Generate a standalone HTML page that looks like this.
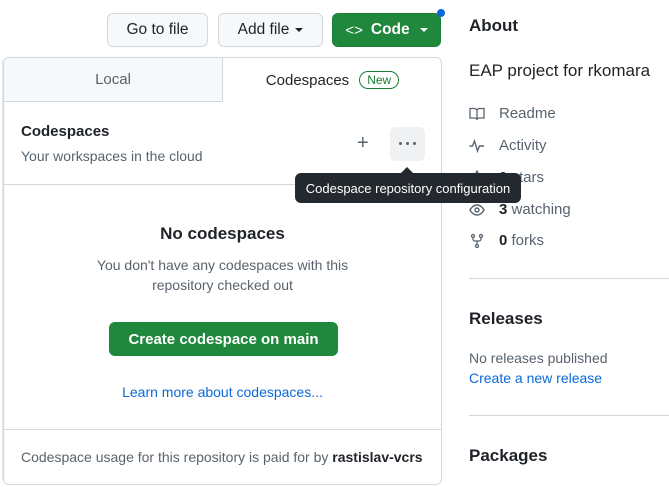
<!DOCTYPE html>
<html><head><style>
*{box-sizing:border-box;margin:0;padding:0}
body{width:669px;height:487px;overflow:hidden;background:#fff;font-family:"Liberation Sans",sans-serif;color:#1f2328;position:relative}
.abs{position:absolute}
.btn{position:absolute;top:13px;height:34px;border:1px solid #d0d7de;border-radius:6px;background:#f6f8fa;font-size:15.5px;font-weight:500;display:flex;align-items:center;justify-content:center;color:#1f2328}
.caret{display:inline-block;width:0;height:0;border-left:4px solid transparent;border-right:4px solid transparent;border-top:4px solid currentColor;margin-left:6px}
.side{position:absolute;left:469px;font-size:15px;color:#59636e;display:flex;align-items:center}
.side svg{margin-right:14px}
.dot{position:absolute;top:15px;width:3px;height:3px;border-radius:50%;background:#59636e}
</style></head><body>
<div class="abs" style="left:0;top:60px;width:3px;height:420px;border-right:1px solid #e5e8eb"></div>
<div class="btn" style="left:107px;width:101px">Go to file</div>
<div class="btn" style="left:218px;width:105px">Add file<span class="caret"></span></div>
<div class="btn" style="left:332px;width:109px;background:#1f883d;border-color:#1a7f37;color:#fff;font-weight:bold"><span style="font-weight:normal;margin-right:8px;font-size:15px">&lt;&gt;</span>Code<span class="caret" style="margin-left:10px"></span></div>
<div class="abs" style="left:437px;top:9px;width:8px;height:8px;border-radius:50%;background:#0969da"></div>

<div class="abs" style="left:3px;top:57px;width:439px;height:428px;border:1px solid #d0d7de;border-radius:6px;background:#fff;overflow:hidden">
 <div class="abs" style="left:0;top:0;width:219px;height:44px;background:#f6f8fa;border-bottom:1px solid #d0d7de;border-right:1px solid #d0d7de;font-size:15px;color:#59636e;display:flex;align-items:center;justify-content:center">Local</div>
 <div class="abs" style="left:219px;top:0;width:219px;height:44px;display:flex;align-items:center;justify-content:center;font-size:15px;color:#1f2328">Codespaces<span style="margin-left:10px;border:1px solid #1a7f37;color:#1a7f37;border-radius:10px;font-size:12px;padding:1px 7px;font-weight:500">New</span></div>
 <div class="abs" style="left:17px;top:65px;font-size:15px;font-weight:bold">Codespaces</div>
 <div class="abs" style="left:17px;top:90px;font-size:14px;color:#59636e">Your workspaces in the cloud</div>
 <div class="abs" style="left:353px;top:75px;font-size:20px;color:#59636e;line-height:20px">+</div>
 <div class="abs" style="left:386px;top:69px;width:35px;height:34px;background:#eff1f3;border-radius:6px">
  <div class="dot" style="left:9px"></div><div class="dot" style="left:16px"></div><div class="dot" style="left:23px"></div>
 </div>
 <div class="abs" style="left:0;top:126px;width:439px;border-top:1px solid #d0d7de"></div>
 <div class="abs" style="left:0;top:166px;width:437px;text-align:center;font-size:17px;font-weight:bold">No codespaces</div>
 <div class="abs" style="left:0;top:197px;width:437px;text-align:center;font-size:14px;color:#59636e;line-height:20px">You don't have any codespaces with this<br>repository checked out</div>
 <div class="abs" style="left:105px;top:264px;width:229px;height:34px;background:#1f883d;border-radius:6px;color:#fff;font-weight:bold;font-size:15px;display:flex;align-items:center;justify-content:center">Create codespace on main</div>
 <div class="abs" style="left:0;top:326px;width:437px;text-align:center;font-size:14px;color:#0969da">Learn more about codespaces...</div>
 <div class="abs" style="left:0;top:371px;width:439px;border-top:1px solid #d0d7de"></div>
 <div class="abs" style="left:17px;top:391px;font-size:14px;color:#59636e">Codespace usage for this repository is paid for by <b style="color:#1f2328;font-weight:bold">rastislav-vcrs</b></div>
</div>

<div class="abs" style="left:469px;top:16px;font-size:17px;font-weight:bold">About</div>
<div class="abs" style="left:469px;top:61px;font-size:17px">EAP project for rkomara</div>
<div class="side" style="top:105px"><svg width="16" height="16" viewBox="0 0 16 16" fill="none" stroke="#59636e" stroke-width="1.3"><path d="M1 2.5h4.5a2.5 2.5 0 0 1 2.5 2.5v9a2 2 0 0 0-2-2H1zM15 2.5h-4.5A2.5 2.5 0 0 0 8 5v9a2 2 0 0 1 2-2h5z"/></svg>Readme</div>
<div class="side" style="top:137px"><svg width="16" height="16" viewBox="0 0 16 16" fill="none" stroke="#59636e" stroke-width="1.4"><path d="M0.5 8h3l2-5 3 10 2-5h4.5"/></svg>Activity</div>
<div class="side" style="top:169px"><svg width="16" height="16" viewBox="0 0 16 16" fill="none" stroke="#59636e" stroke-width="1.3"><path d="M8 1l2 4.3 4.6.6-3.4 3.2.9 4.6L8 11.5l-4.1 2.2.9-4.6L1.4 5.9 6 5.3z"/></svg><b style="color:#1f2328">0</b>&nbsp;stars</div>
<div class="side" style="top:201px"><svg width="16" height="16" viewBox="0 0 16 16" fill="none" stroke="#59636e" stroke-width="1.4"><path d="M1 8s2.5-5 7-5 7 5 7 5-2.5 5-7 5-7-5-7-5z"/><circle cx="8" cy="8" r="2"/></svg><b style="color:#1f2328">3</b>&nbsp;watching</div>
<div class="side" style="top:232px"><svg width="16" height="16" viewBox="0 0 16 16" fill="none" stroke="#59636e" stroke-width="1.3"><circle cx="4" cy="3" r="1.5"/><circle cx="12" cy="3" r="1.5"/><circle cx="8" cy="13" r="1.5"/><path d="M4 4.5v1.5a2 2 0 0 0 2 2h4a2 2 0 0 0 2-2V4.5M8 8v3.5"/></svg><b style="color:#1f2328">0</b>&nbsp;forks</div>
<div class="abs" style="left:469px;top:278px;width:200px;border-top:1px solid #d0d7de"></div>
<div class="abs" style="left:469px;top:309px;font-size:17px;font-weight:bold">Releases</div>
<div class="abs" style="left:469px;top:350px;font-size:14px;color:#59636e">No releases published</div>
<div class="abs" style="left:469px;top:370px;font-size:14px;color:#0969da">Create a new release</div>
<div class="abs" style="left:469px;top:415px;width:200px;border-top:1px solid #d0d7de"></div>
<div class="abs" style="left:469px;top:446px;font-size:17px;font-weight:bold">Packages</div>

<div class="abs" style="left:401px;top:167px;width:0;height:0;border-left:6px solid transparent;border-right:6px solid transparent;border-bottom:6px solid #24292f"></div>
<div class="abs" style="left:295px;top:173px;width:226px;height:30px;background:#24292f;border-radius:6px;color:#fff;font-size:13px;display:flex;align-items:center;justify-content:center;white-space:nowrap">Codespace repository configuration</div>
</body></html>
